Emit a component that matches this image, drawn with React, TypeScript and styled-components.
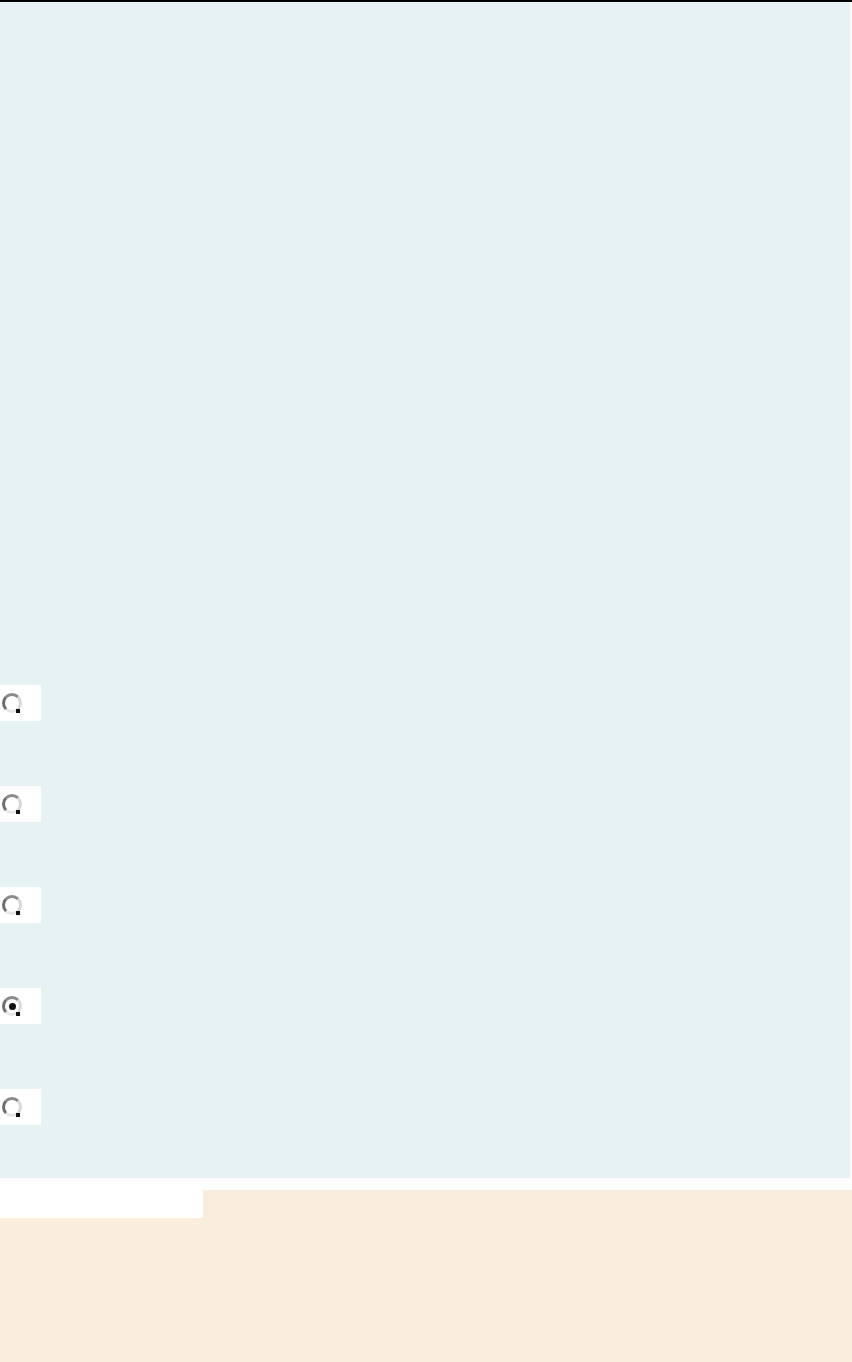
import React from "react";
import styled, { createGlobalStyle } from "styled-components";

const options = ["a", "b", "c", "d", "e"];
const selected = 3;

const GlobalStyle = createGlobalStyle`
  html, body {
    margin: 0;
    padding: 0;
    background: #ffffff;
    font-family: "Liberation Sans", Arial, sans-serif;
  }
`;

const Page = styled.div`
  width: 852px;
  border-top: 2px solid #000000;
`;

const Panel = styled.div`
  width: 850px;
  height: 1176px;
  box-sizing: border-box;
  background: #e7f2f4;
  padding-top: 683px;
  display: flex;
  flex-direction: column;
  gap: 65px;
`;

const OptionBox = styled.label`
  width: 41px;
  height: 36px;
  background: #ffffff;
  display: flex;
  align-items: center;
  padding-left: 2px;
  box-sizing: border-box;
`;

const Radio = styled.span<{ $checked: boolean }>`
  position: relative;
  width: 20px;
  height: 20px;
  box-sizing: border-box;
  border-radius: 50%;
  border: 3px solid;
  border-color: #8a8a8a #d8d8d8 #e6e6e6 #6e6e6e;
  background: #ffffff;
  display: flex;
  align-items: center;
  justify-content: center;

  &::before {
    content: "";
    display: ${(p) => (p.$checked ? "block" : "none")};
    width: 7px;
    height: 7px;
    border-radius: 50%;
    background: #111111;
  }

  &::after {
    content: "";
    position: absolute;
    right: -1px;
    bottom: -3px;
    width: 4px;
    height: 4px;
    background: #111111;
  }
`;

const Footer = styled.div`
  margin-top: 12px;
  width: 852px;
  height: 172px;
  background: #fbeddb;
`;

const Tab = styled.div`
  width: 203px;
  height: 28px;
  background: #ffffff;
`;

export default function App() {
  return (
    <>
      <GlobalStyle />
      <Page>
        <Panel>
          {options.map((o, i) => (
            <OptionBox key={o}>
              <Radio $checked={i === selected} />
            </OptionBox>
          ))}
        </Panel>
        <Footer>
          <Tab />
        </Footer>
      </Page>
    </>
  );
}
